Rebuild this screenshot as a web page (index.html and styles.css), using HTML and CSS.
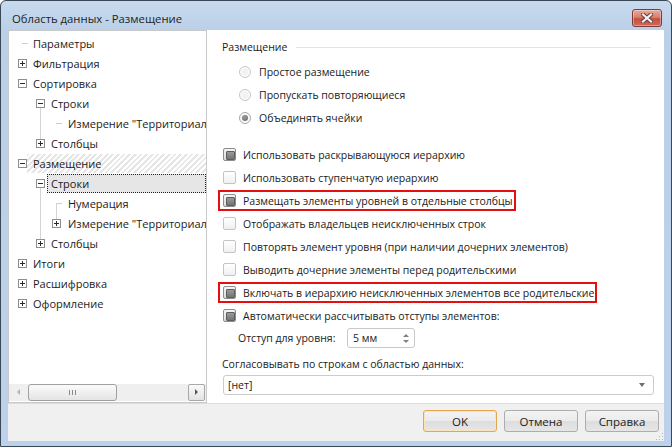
FILE: index.html
```html
<!DOCTYPE html>
<html lang="ru">
<head>
<meta charset="utf-8">
<title>Область данных - Размещение</title>
<link rel="stylesheet" href="styles.css">
</head>
<body>
<div class="window">
  <div class="titlebar">
    <span class="title">Область данных - Размещение</span>
    <span class="close">
      <svg width="12" height="10" viewBox="0 0 12 10">
        <path d="M2 1.5 L10 8.5 M10 1.5 L2 8.5" stroke="#6b3a3a" stroke-width="4.2" stroke-linecap="square" fill="none"/>
        <path d="M2 1.5 L10 8.5 M10 1.5 L2 8.5" stroke="#f4f4f4" stroke-width="2.2" stroke-linecap="square" fill="none"/>
      </svg>
    </span>
  </div>
  <div class="client">
    <div class="main">
      <div class="tree">
        <div class="tree-list">
          <div class="node l0"><span class="slot dash"></span><span class="label">Параметры</span></div>
          <div class="node l0"><span class="slot exp plus"></span><span class="label">Фильтрация</span></div>
          <div class="node l0"><span class="slot exp minus"></span><span class="label">Сортировка</span></div>
          <div class="group g1">
            <div class="node l1"><span class="slot exp minus"></span><span class="label">Строки</span></div>
            <div class="node l2"><span class="slot dash"></span><span class="label">Измерение "Территориал</span></div>
            <div class="node l1"><span class="slot exp plus"></span><span class="label">Столбцы</span></div>
          </div>
          <div class="node l0"><span class="slot exp minus"></span><span class="label hatch">Размещение</span></div>
          <div class="group g1">
            <div class="node l1"><span class="slot exp minus"></span><span class="label selected">Строки</span></div>
            <div class="group g2">
              <div class="node l2"><span class="slot dash"></span><span class="label">Нумерация</span></div>
              <div class="node l2"><span class="slot exp plus"></span><span class="label">Измерение "Территориал</span></div>
            </div>
            <div class="node l1"><span class="slot exp plus"></span><span class="label">Столбцы</span></div>
          </div>
          <div class="node l0"><span class="slot exp plus"></span><span class="label">Итоги</span></div>
          <div class="node l0"><span class="slot exp plus"></span><span class="label">Расшифровка</span></div>
          <div class="node l0"><span class="slot exp plus"></span><span class="label">Оформление</span></div>
        </div>
        <div class="hscroll">
          <span class="sb-arrow left"></span>
          <span class="thumb"><span class="grip"></span></span>
          <span class="track"></span>
          <span class="sb-arrow right"></span>
        </div>
      </div>
      <div class="panel">
        <div class="group-title">Размещение</div>
        <div class="radios">
          <div class="row"><span class="rb"></span><span>Простое размещение</span></div>
          <div class="row"><span class="rb"></span><span>Пропускать повторяющиеся</span></div>
          <div class="row"><span class="rb on"></span><span>Объединять ячейки</span></div>
        </div>
        <div class="checks">
          <div class="row check"><span class="cb on"></span><span>Использовать раскрывающуюся иерархию</span></div>
          <div class="row check"><span class="cb"></span><span>Использовать ступенчатую иерархию</span></div>
          <div class="row check mark"><span class="cb on"></span><span>Размещать элементы уровней в отдельные столбцы</span></div>
          <div class="row check"><span class="cb"></span><span>Отображать владельцев неисключенных строк</span></div>
          <div class="row check"><span class="cb"></span><span>Повторять элемент уровня (при наличии дочерних элементов)</span></div>
          <div class="row check"><span class="cb"></span><span>Выводить дочерние элементы перед родительскими</span></div>
          <div class="row check mark"><span class="cb on"></span><span>Включать в иерархию неисключенных элементов все родительские</span></div>
          <div class="row check"><span class="cb on"></span><span>Автоматически рассчитывать отступы элементов:</span></div>
        </div>
        <div class="indent-row">
          <span class="indent-label">Отступ для уровня:</span>
          <span class="spinner"><span class="spin-value">5 мм</span><span class="spin-arrows"><span class="up"></span><span class="down"></span></span></span>
        </div>
        <div class="combo-label">Согласовывать по строкам с областью данных:</div>
        <div class="combo"><span>[нет]</span><span class="combo-arrow"></span></div>
      </div>
    </div>
    <div class="footer">
      <span class="btn default">OK</span>
      <span class="btn">Отмена</span>
      <span class="btn">Справка</span>
      <span class="grip-corner"></span>
    </div>
  </div>
</div>
</body>
</html>
```
FILE: styles.css
```css
* { box-sizing: border-box; }
html, body { margin: 0; padding: 0; }
body {
  width: 672px;
  height: 447px;
  overflow: hidden;
  font-family: "Open Sans", "Noto Sans", sans-serif;
  font-size: 11px;
  color: #1b1b1b;
  background: #ffffff;
}
.window {
  width: 672px;
  height: 447px;
  display: flex;
  flex-direction: column;
  border: 1px solid #3a4757;
  border-radius: 6px 6px 0 0;
  background: linear-gradient(#c8daee, #bad0e8 30px, #bdd2ea);
  padding: 0 7px 5px 7px;
}
.titlebar {
  height: 29px;
  margin: 0 -7px;
  padding: 8px 9px 0 11px;
  display: flex;
  align-items: flex-start;
  flex-shrink: 0;
}
.title {
  font-size: 11.3px;
  color: #1e1e1e;
  line-height: 18px;
  margin-top: 1px;
}
.close {
  margin-left: auto;
  width: 30px;
  height: 18px;
  border: 1px solid #7e3b36;
  border-radius: 3px;
  background: linear-gradient(#e9aa9c, #d7806f 45%, #c5503f 55%, #cf6a57);
  display: flex;
  align-items: center;
  justify-content: center;
  box-shadow: inset 0 0 0 1px rgba(255,255,255,0.35);
}
.close svg { display: block; }

.client {
  flex: 1;
  display: flex;
  flex-direction: column;
  background: #f0f0f0;
}
.main {
  height: 373px;
  display: flex;
  flex-shrink: 0;
}
.tree {
  width: 199px;
  border: 1px solid #c9c9c9;
  background: #ffffff;
  display: flex;
  flex-direction: column;
}
.tree-list {
  flex: 1;
  overflow: hidden;
  padding-top: 2px;
  white-space: nowrap;
}
.node {
  height: 20px;
  display: flex;
  align-items: center;
  position: relative;
}
.node.l0 { padding-left: 9px; }
.node.l1 { padding-left: 27px; }
.node.l2 { padding-left: 43px; }
.slot {
  width: 9px;
  height: 9px;
  flex-shrink: 0;
  margin-right: 4px;
  position: relative;
  z-index: 1;
}
.node.l0 .slot, .node.l1 .slot { margin-right: 3px; }
.exp {
  border: 1px solid #8e8e8e;
  background: #ffffff;
}
.exp::before {
  content: "";
  position: absolute;
  left: 1px;
  top: 3px;
  width: 5px;
  height: 1px;
  background: #2a2a2a;
}
.exp.plus::after {
  content: "";
  position: absolute;
  left: 3px;
  top: 1px;
  width: 1px;
  height: 5px;
  background: #2a2a2a;
}
.dash::after {
  content: "";
  position: absolute;
  left: 4px;
  top: 4px;
  width: 6px;
  height: 1px;
  background: #cfcfcf;
}
.label {
  flex: 1;
  height: 19px;
  line-height: 19px;
  padding-left: 3px;
  overflow: hidden;
}
.label.hatch {
  margin-left: -3px;
  padding-left: 6px;
  background: repeating-linear-gradient(135deg, #e6e6e6 0 2px, #ffffff 2px 4px);
}
.label.selected {
  margin-left: -1px;
  padding-left: 3px;
  border: 1px dotted #222;
  background: #e6e6e6;
  line-height: 17px;
}
.group { position: relative; }
.group::before {
  content: "";
  position: absolute;
  top: 10px;
  bottom: 10px;
  width: 1px;
  background: #d4d4d4;
}
.group.g1::before { left: 31px; }
.group.g2::before { left: 47px; }

.hscroll {
  height: 17px;
  flex-shrink: 0;
  display: flex;
  align-items: center;
  background: #efefef;
  margin-bottom: 1px;
}
.sb-arrow {
  width: 19px;
  height: 17px;
  position: relative;
  flex-shrink: 0;
}
.sb-arrow.left::after {
  content: "";
  position: absolute;
  left: 8px;
  top: 5px;
  border-right: 3px solid #b5b5b5;
  border-top: 3px solid transparent;
  border-bottom: 3px solid transparent;
}
.sb-arrow.right {
  width: 17px;
  margin-right: 1px;
  border: 1px solid #a8a8a8;
  border-radius: 2px;
  background: linear-gradient(#fafafa, #e3e3e3);
}
.sb-arrow.right::after {
  content: "";
  position: absolute;
  left: 6px;
  top: 4px;
  border-left: 3px solid #555;
  border-top: 3px solid transparent;
  border-bottom: 3px solid transparent;
}
.thumb {
  width: 89px;
  height: 17px;
  border: 1px solid #a0a0a0;
  border-radius: 3px;
  background: linear-gradient(#fbfbfb, #e4e4e4);
  display: flex;
  align-items: center;
  justify-content: center;
}
.grip {
  width: 7px;
  height: 5px;
  background: linear-gradient(90deg, #8a8a8a 0 1px, transparent 1px 3px, #8a8a8a 3px 4px, transparent 4px 6px, #8a8a8a 6px 7px);
}
.track { flex: 1; }

.panel {
  flex: 1;
  background: #ffffff;
  padding: 9px 10px 0 15px;
  display: flex;
  flex-direction: column;
  font-size: 10.5px;
}
.group-title {
  height: 16px;
  line-height: 16px;
  display: flex;
  align-items: center;
  margin-bottom: 6px;
}
.group-title::after {
  content: "";
  flex: 1;
  height: 1px;
  background: #e3e3e3;
  margin: 0 3px 0 9px;
}
.radios, .checks {
  display: flex;
  flex-direction: column;
  gap: 2px;
}
.radios { padding-left: 17px; }
.checks { margin-top: 16px; }
.row {
  height: 21px;
  display: flex;
  align-items: center;
  white-space: nowrap;
}
.rb {
  width: 12px;
  height: 12px;
  border-radius: 50%;
  border: 1px solid #c7c7c7;
  background: radial-gradient(circle, #f2f2f2 0 3px, #fafafa 4px);
  margin-right: 8px;
  position: relative;
  flex-shrink: 0;
}
.rb.on { border-color: #a9a9a9; }
.rb.on::after {
  content: "";
  position: absolute;
  left: 2px;
  top: 2px;
  width: 6px;
  height: 6px;
  border-radius: 50%;
  background: radial-gradient(circle at 40% 35%, #9a9a9a, #6a6a6a);
}
.check { padding-left: 1px; }
.cb {
  width: 13px;
  height: 13px;
  border: 1px solid #c4c4c4;
  border-radius: 2px;
  background: linear-gradient(#ffffff, #f0f0f0);
  margin-right: 7px;
  position: relative;
  flex-shrink: 0;
}
.cb.on { border-color: #8d8d8d; background: linear-gradient(#f4f4f4, #dcdcdc); }
.cb.on::after {
  content: "";
  position: absolute;
  left: 2px;
  top: 2px;
  width: 7px;
  height: 7px;
  border: 1px solid #5d5d5d;
  border-radius: 1px;
  background: linear-gradient(#9a9a9a, #747474);
}
.check.mark {
  width: fit-content;
  margin-left: -4px;
  padding-left: 5px;
  padding-right: 3px;
  box-shadow: inset 0 0 0 2px #e50f0f;
}
.indent-row {
  margin-top: 2px;
  height: 20px;
  display: flex;
  align-items: center;
  padding-left: 16px;
}
.indent-label { width: 109px; }
.spinner {
  width: 68px;
  height: 20px;
  border: 1px solid #c9c9c9;
  border-radius: 3px;
  display: flex;
  align-items: center;
  padding-left: 5px;
  background: #ffffff;
}
.spin-value { flex: 1; font-size: 10.5px; }
.spin-arrows {
  width: 16px;
  display: flex;
  flex-direction: column;
  align-items: center;
  gap: 3px;
}
.spin-arrows .up {
  border-bottom: 3px solid #808080;
  border-left: 3px solid transparent;
  border-right: 3px solid transparent;
}
.spin-arrows .down {
  border-top: 3px solid #808080;
  border-left: 3px solid transparent;
  border-right: 3px solid transparent;
}
.combo-label {
  margin-top: 8px;
  height: 16px;
  line-height: 16px;
}
.combo {
  margin-top: 3px;
  margin-left: 1px;
  height: 20px;
  border: 1px solid #cbcbcb;
  border-radius: 3px;
  display: flex;
  align-items: center;
  padding: 0 8px 0 4px;
  background: #ffffff;
}
.combo span:first-child { flex: 1; }
.combo-arrow {
  border-top: 4px solid #6e6e6e;
  border-left: 3px solid transparent;
  border-right: 3px solid transparent;
}

.footer {
  flex: 1;
  border-top: 1px solid #dcdcdc;
  display: flex;
  justify-content: flex-end;
  align-items: flex-start;
  gap: 7px;
  padding: 6px 5px 0 0;
  position: relative;
}
.btn {
  width: 74px;
  height: 22px;
  border: 1px solid #adadad;
  border-radius: 3px;
  background: linear-gradient(#f3f3f3, #ebebeb 50%, #dddddd 50%, #e6e6e6);
  display: flex;
  align-items: center;
  justify-content: center;
  font-size: 11.5px;
}
.btn.default {
  border-color: #e6a650;
  box-shadow: inset 0 0 0 1px #fbe3bd;
}
.grip-corner {
  position: absolute;
  right: 1px;
  bottom: 1px;
  width: 8px;
  height: 8px;
  background:
    radial-gradient(circle, #b5b5b5 0 0.8px, transparent 1px) 0 0 / 3px 3px;
  clip-path: polygon(100% 0, 100% 100%, 0 100%);
}
```
